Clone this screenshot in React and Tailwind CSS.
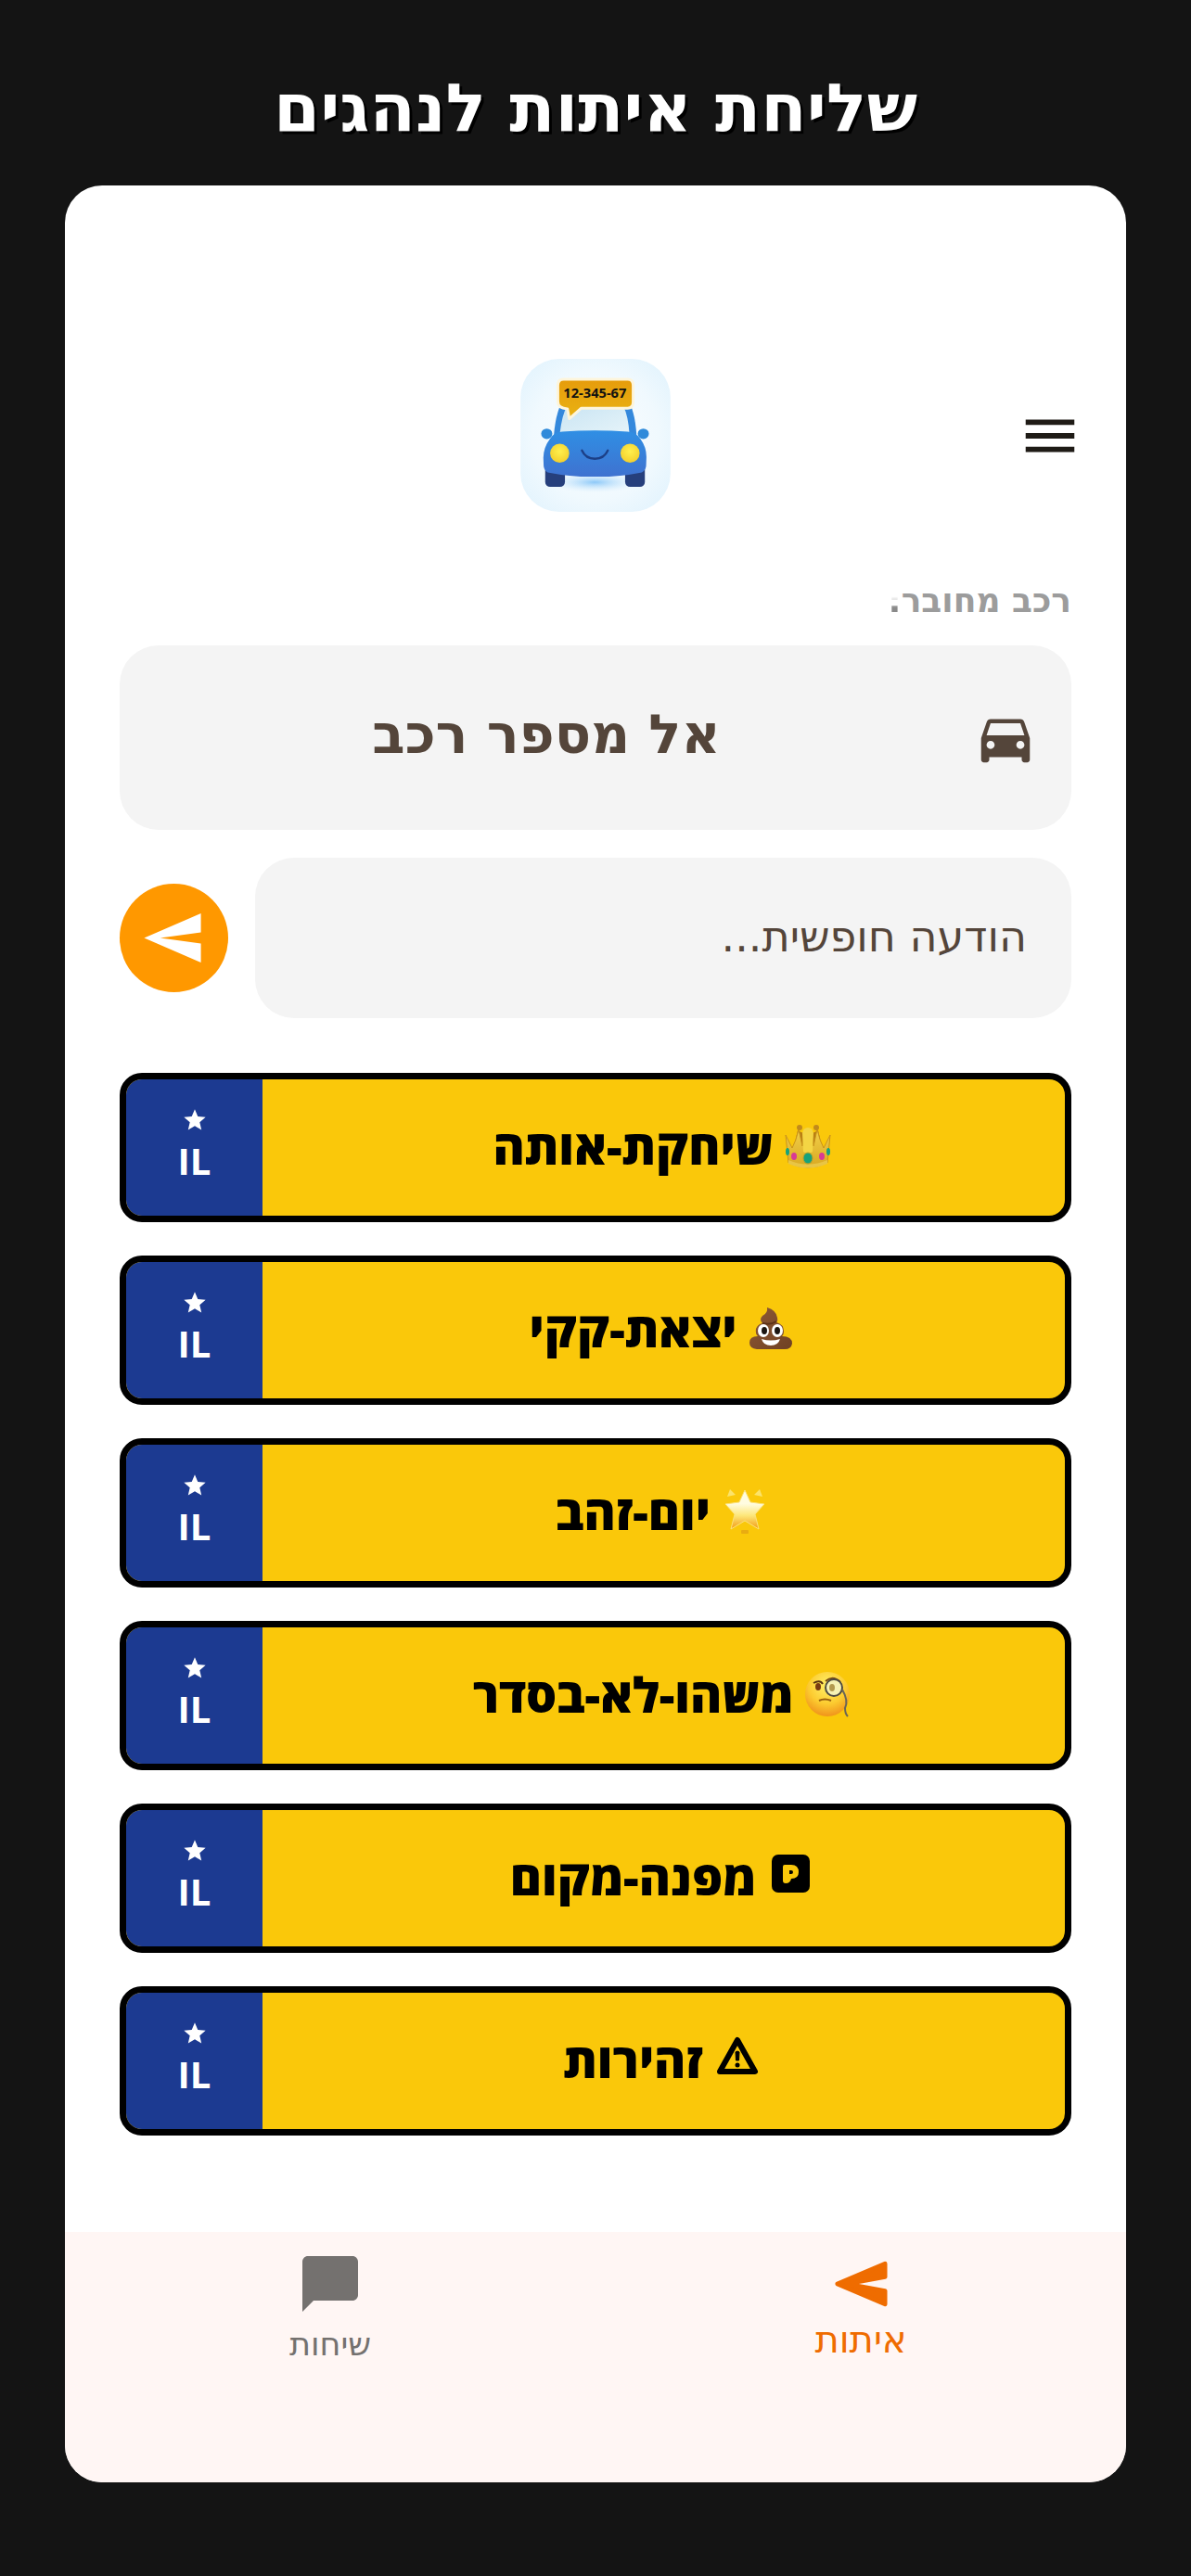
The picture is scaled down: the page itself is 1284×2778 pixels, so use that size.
import React, { useState } from "react";
import { MdMenu, MdDirectionsCar, MdChatBubble, MdStar } from "react-icons/md";

const AppLogo = () => (
  <svg viewBox="65 52 486 496" className="h-[165px] w-[162px]" role="img" aria-label="12-345-67">
    <defs>
      <radialGradient id="tile" cx="0.5" cy="0.5" r="0.7">
        <stop offset="0" stopColor="#fbfdff" />
        <stop offset="0.6" stopColor="#f0f9fe" />
        <stop offset="1" stopColor="#dff2fd" />
      </radialGradient>
      <linearGradient id="body" x1="0" y1="0" x2="0" y2="1">
        <stop offset="0" stopColor="#2f8fe4" />
        <stop offset="1" stopColor="#3f72d0" />
      </linearGradient>
      <linearGradient id="bubble" x1="0" y1="0" x2="0" y2="1">
        <stop offset="0" stopColor="#e69c0c" />
        <stop offset="1" stopColor="#e9b212" />
      </linearGradient>
      <linearGradient id="glass" x1="0" y1="0" x2="1" y2="1">
        <stop offset="0" stopColor="#c9e4f3" />
        <stop offset="1" stopColor="#e6f4f9" />
      </linearGradient>
      <radialGradient id="lamp" cx="0.5" cy="0.4" r="0.6">
        <stop offset="0" stopColor="#fff04e" />
        <stop offset="1" stopColor="#f3cf2c" />
      </radialGradient>
      <radialGradient id="ground">
        <stop offset="0" stopColor="#8cc8f8" />
        <stop offset="1" stopColor="#d9effc" stopOpacity="0" />
      </radialGradient>
    </defs>
    <rect x="65" y="52" width="486" height="496" rx="125" fill="url(#tile)" />
    <ellipse cx="306" cy="452" rx="150" ry="34" fill="url(#ground)" />
    <rect x="145" y="390" width="64" height="77" rx="16" fill="#263f7c" />
    <rect x="404" y="390" width="64" height="77" rx="16" fill="#263f7c" />
    <path d="M173 300 Q180 215 208 180 L408 180 Q436 215 441 300 Z" fill="#3488dc" />
    <path d="M192 296 Q200 230 216 205 L398 205 Q414 235 418 296 Q306 276 192 296 Z" fill="url(#glass)" />
    <ellipse cx="150" cy="295" rx="18" ry="17" fill="#2f8ada" />
    <ellipse cx="463" cy="295" rx="18" ry="17" fill="#2f8ada" />
    <path d="M160 312 Q172 290 200 288 Q306 280 412 288 Q440 290 454 312 Q474 340 473 372 L472 400 Q470 414 458 420 Q385 435 306 434 Q228 435 153 420 Q142 414 140 400 L139 372 Q140 338 160 312 Z" fill="url(#body)" />
    <circle cx="192" cy="358" r="31" fill="url(#lamp)" />
    <circle cx="420" cy="358" r="31" fill="url(#lamp)" />
    <path d="M264 349 Q276 376 306 376 Q336 376 348 349" fill="none" stroke="#1c3f86" strokeWidth="7" strokeLinecap="round" />
    <path d="M205 118 H412 Q430 118 430 138 V192 Q430 212 412 212 H262 L223 246 L217 214 Q186 212 186 190 V138 Q186 118 205 118 Z" fill="url(#bubble)" stroke="#fdf5dc" strokeWidth="9" strokeLinejoin="round" />
    <text x="306" y="179" textAnchor="middle" fontSize="44" className="font-['Noto_Sans',sans-serif] font-bold" fill="#111111">12-345-67</text>
  </svg>
);

const SendIcon = ({ rounded = false, className }) => (
  <svg viewBox="0 0 60 52" className={className} fill="currentColor" stroke="currentColor" strokeWidth={rounded ? 5 : 0} strokeLinejoin="round" aria-hidden="true">
    {rounded ? (
      <path d="M57 3 L3 26 L57 49 V34 L14 26 L57 18 Z" />
    ) : (
      <path d="M60 0 L0 26 L60 52 V32 L17 26 L60 20 Z" />
    )}
  </svg>
);

const CrownIcon = () => (
  <svg viewBox="0 0 50 50" className="size-[50px]" aria-hidden="true">
    <defs>
      <linearGradient id="gold" x1="0" y1="0" x2="0" y2="1">
        <stop offset="0" stopColor="#f2d04a" />
        <stop offset="1" stopColor="#d9a821" />
      </linearGradient>
    </defs>
    <path d="M8 34 L14 8 Q21 12 25 12 Q29 12 36 8 L42 34 Z" fill="#b97f13" />
    <path d="M1 13 L8 27 Q12 20 15 7 L19 25 L25 9 L31 25 L35 7 Q38 20 42 27 L49 13 L46 43 Q25 53 4 43 Z" fill="url(#gold)" stroke="#c9921b" strokeWidth="1" />
    <path d="M19 11 Q20 5 25 5 Q30 5 31 11 L30 31 Q25 35 20 31 Z" fill="#f4d544" />
    <circle cx="16" cy="5" r="3" fill="#c18a1c" />
    <circle cx="34" cy="5" r="3" fill="#c18a1c" />
    <path d="M4 40 Q25 49 46 40 L46 44 Q25 53 4 44 Z" fill="#e8c545" />
    <ellipse cx="25" cy="38" rx="5" ry="6" fill="#16a27c" stroke="#b8a12b" strokeWidth="1" />
    <ellipse cx="10" cy="36" rx="3" ry="4" fill="#d83a94" />
    <ellipse cx="40" cy="36" rx="3" ry="4" fill="#d83a94" />
    <ellipse cx="3" cy="31" rx="2" ry="4" fill="#16a27c" />
    <ellipse cx="47" cy="31" rx="2" ry="4" fill="#16a27c" />
  </svg>
);

const PoopIcon = () => (
  <svg viewBox="0 0 50 50" className="size-[50px]" aria-hidden="true">
    <defs>
      <linearGradient id="brown" x1="0" y1="0" x2="1" y2="1">
        <stop offset="0" stopColor="#8f5a36" />
        <stop offset="1" stopColor="#6f4023" />
      </linearGradient>
    </defs>
    <path d="M21 2 Q31 5 32 13 Q33 16 31 18 Q39 20 39 28 Q39 31 37 33 Q48 33 48 41 Q47 47 40 47 H10 Q2 46 2 40 Q2 33 11 33 Q8 30 9 25 Q11 20 16 19 Q12 15 16 11 Q22 8 21 2 Z" fill="url(#brown)" />
    <path d="M16 19 Q25 21 31 17" stroke="#5d3219" strokeWidth="2" fill="none" />
    <ellipse cx="17" cy="27" rx="6" ry="7" fill="#fff" />
    <ellipse cx="32" cy="27" rx="6" ry="7" fill="#fff" />
    <ellipse cx="18" cy="27" rx="3" ry="4" fill="#1b1512" />
    <ellipse cx="32" cy="27" rx="3" ry="4" fill="#1b1512" />
    <path d="M15 36 Q25 39 35 36 Q33 43 25 43 Q17 43 15 36 Z" fill="#fff" />
  </svg>
);

const GlowStarIcon = () => (
  <svg viewBox="0 0 50 50" className="size-[50px]" aria-hidden="true">
    <defs>
      <linearGradient id="glow" x1="0" y1="0" x2="0" y2="1">
        <stop offset="0.35" stopColor="#fffce0" />
        <stop offset="0.65" stopColor="#fde77a" />
        <stop offset="1" stopColor="#f29a12" />
      </linearGradient>
    </defs>
    <path d="M9 1 L15 7 L6 9 Z M41 1 L35 7 L44 9 Z" fill="#fbe36b" />
    <path d="M25 2 L31 15 L46 17 L36 28 L40 44 L25 35 L10 44 L14 28 L4 17 L19 15 Z" fill="url(#glow)" stroke="#fbe27a" strokeWidth="1" strokeLinejoin="round" />
    <rect x="21" y="45" width="8" height="4" rx="1" fill="#e9ac10" />
  </svg>
);

const MonocleIcon = () => (
  <svg viewBox="0 0 50 50" className="size-[50px]" aria-hidden="true">
    <defs>
      <radialGradient id="face" cx="0.5" cy="0.3" r="0.7">
        <stop offset="0" stopColor="#fff26a" />
        <stop offset="0.6" stopColor="#fccb30" />
        <stop offset="1" stopColor="#f0931b" />
      </radialGradient>
    </defs>
    <circle cx="25" cy="25" r="24" fill="url(#face)" />
    <path d="M10 13 Q17 9 20 14" stroke="#5a3410" strokeWidth="2" fill="none" />
    <path d="M23 11 Q31 4 39 12" stroke="#7a4c14" strokeWidth="2" fill="none" />
    <ellipse cx="15" cy="17" rx="3" ry="4" fill="#7a3a10" />
    <circle cx="32" cy="18" r="9" fill="#f6f2b4" stroke="#4d4a42" strokeWidth="2" />
    <ellipse cx="30" cy="18" rx="3" ry="4" fill="#b39a4f" />
    <path d="M16 32 Q22 29 29 32" stroke="#99600f" strokeWidth="2" fill="none" />
    <path d="M41 20 Q48 32 44 40 Q44 46 47 49" stroke="#6a6558" strokeWidth="2" fill="none" />
  </svg>
);

const ParkingIcon = () => (
  <svg viewBox="0 0 50 50" className="size-[50px]" aria-hidden="true">
    <rect x="5" y="1" width="41" height="41" rx="7" fill="#000" />
    <path fillRule="evenodd" d="M19 12 H26 Q34 12 34 20 Q34 27 26 27 Q25 32 20 32 Q17 32 17 29 V14 Q17 12 19 12 Z M24 18 V22 H26 Q28 22 28 20 Q28 18 26 18 Z" fill="#fac80a" />
  </svg>
);

const WarningIcon = () => (
  <svg viewBox="0 0 50 50" className="size-[50px]" aria-hidden="true">
    <path d="M25 4 L44 38 H6 Z" fill="none" stroke="#000" strokeWidth="6" strokeLinejoin="round" />
    <path d="M23 17 Q25 15 27 17 L26.5 26 H23.5 Z" fill="#000" stroke="#000" strokeLinejoin="round" />
    <circle cx="25" cy="31" r="2.5" fill="#000" />
  </svg>
);

const plates = [
  { id: "king", label: "שיחקת-אותה", Icon: CrownIcon },
  { id: "poop", label: "יצאת-קקי", Icon: PoopIcon },
  { id: "gold", label: "יום-זהב", Icon: GlowStarIcon },
  { id: "issue", label: "משהו-לא-בסדר", Icon: MonocleIcon },
  { id: "parking", label: "מפנה-מקום", Icon: ParkingIcon },
  { id: "caution", label: "זהירות", Icon: WarningIcon },
];

const PlateButton = ({ label, Icon, onClick }) => (
  <button
    type="button"
    onClick={onClick}
    className="flex h-[161px] w-full overflow-hidden rounded-3xl border-7 border-black bg-[#fac80a]"
  >
    <span className="flex flex-1 items-center justify-center gap-3 self-stretch pr-1 pb-1">
      <Icon />
      <span className="font-['Open_Sans','Noto_Sans',sans-serif] text-[52px] leading-[64px] font-extrabold text-black">{label}</span>
    </span>
    <span className="flex w-[147px] flex-col items-center justify-center self-stretch bg-[#1c3a91] text-white">
      <MdStar className="size-7" />
      <span className="font-['Open_Sans',sans-serif] text-[40px] leading-[60px] font-bold">IL</span>
    </span>
  </button>
);

const App = () => {
  const [plateNumber, setPlateNumber] = useState("");
  const [message, setMessage] = useState("");

  return (
    <div dir="rtl" className="flex min-h-screen flex-col bg-[#141414] px-[70px] pb-[101px] font-['DejaVu_Sans',sans-serif]">
      {/* Title */}
      <h1 className="flex h-[200px] items-center justify-center pt-8 text-[72px] font-bold text-white [text-shadow:3px_3px_0_#000]">
        שליחת איתות לנהגים
      </h1>

      <div className="flex flex-1 flex-col overflow-hidden rounded-[40px] bg-white">
        {/* Header */}
        <header className="grid grid-cols-[1fr_auto_1fr] items-center px-[47px] pt-[187px]">
          <button type="button" aria-label="תפריט" className="justify-self-start">
            <MdMenu className="size-[70px] text-[#1f1b16]" />
          </button>
          <AppLogo />
        </header>

        <main className="flex flex-1 flex-col px-[59px] pt-[68px]">
          <p className="text-[36px] leading-[56px] font-bold text-[#9c9c9c]">
            רכב מחובר
            <span className="bg-linear-to-t from-[#8a8a8a] from-30% to-white to-60% bg-clip-text text-transparent">:</span>
          </p>

          {/* Plate number */}
          <div className="mt-5 flex h-[199px] items-center rounded-[42px] bg-[#f4f4f4]">
            <span className="flex w-[106px] justify-end">
              <MdDirectionsCar className="size-[70px] text-[#54453a]" />
            </span>
            <input
              aria-label="אל מספר רכב"
              placeholder="אל מספר רכב"
              value={plateNumber}
              onChange={(e) => setPlateNumber(e.target.value)}
              className="h-full min-w-0 flex-1 bg-transparent pb-2 text-center text-[58px] font-bold text-[#54453a] outline-none placeholder:text-[#54453a]"
            />
          </div>

          {/* Free message */}
          <div className="mt-[30px] flex items-center gap-[29px]">
            <input
              aria-label="הודעה חופשית"
              placeholder="הודעה חופשית..."
              value={message}
              onChange={(e) => setMessage(e.target.value)}
              className="h-[173px] min-w-0 flex-1 rounded-[42px] bg-[#f4f4f4] px-12 pb-1 text-[46px] text-[#54453a] outline-none placeholder:text-[#54453a]"
            />
            <button type="button" aria-label="שליחה" className="flex size-[117px] items-center justify-center rounded-full bg-[#ff9800] pr-1 text-white">
              <SendIcon className="h-[53px] w-[62px]" />
            </button>
          </div>

          {/* Quick signals */}
          <div className="mt-[59px] flex flex-col gap-9">
            {plates.map((plate) => (
              <PlateButton key={plate.id} label={plate.label} Icon={plate.Icon} onClick={() => setMessage(plate.label)} />
            ))}
          </div>
        </main>

        {/* Bottom navigation */}
        <nav className="grid h-[270px] grid-cols-2 items-start bg-[#fff6f4] pt-5">
          <button type="button" className="flex flex-col items-center text-[#ef6c00]">
            <span className="flex h-[72px] items-center">
              <SendIcon rounded className="h-[50px] w-[57px]" />
            </span>
            <span className="text-[40px] leading-[48px]">איתות</span>
          </button>
          <button type="button" className="flex flex-col items-center text-[#74716f]">
            <MdChatBubble className="size-[72px]" />
            <span className="text-[35px] leading-[58px]">שיחות</span>
          </button>
        </nav>
      </div>
    </div>
  );
};

export default App;
